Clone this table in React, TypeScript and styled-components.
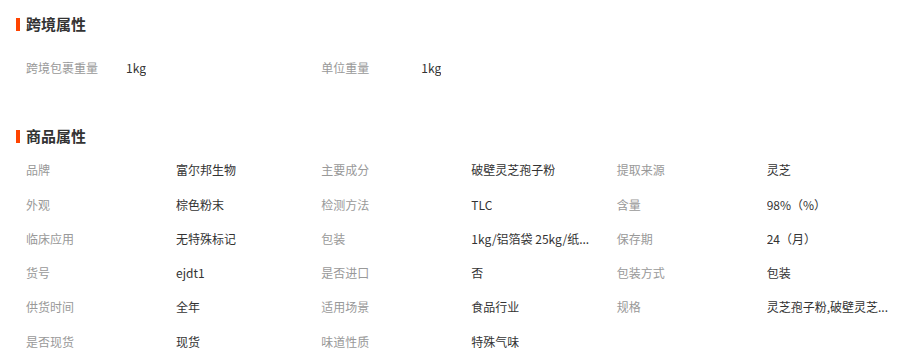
import React from "react";
import styled, { createGlobalStyle } from "styled-components";

const GlobalStyle = createGlobalStyle`
  html, body { margin: 0; padding: 0; background: #fff; }
  body { font-family: "Noto Sans CJK SC", "Microsoft YaHei", sans-serif; }
`;

const Page = styled.div`
  width: 915px;
  padding-left: 16px;
  box-sizing: border-box;
`;

const Section = styled.section<{ $top: number }>`
  padding-top: ${(p) => p.$top}px;
`;

const Title = styled.h3`
  margin: 0;
  height: 20px;
  display: flex;
  align-items: center;
  gap: 6px;
  font-size: 15px;
  font-weight: 700;
  color: #333;
  line-height: 20px;
  &::before {
    content: "";
    width: 4px;
    height: 13px;
    background: #ff4400;
  }
`;

const List = styled.ul<{ $gap: number }>`
  list-style: none;
  margin: ${(p) => p.$gap}px 0 0;
  padding: 0 0 0 10px;
  width: 886px;
  display: grid;
  grid-template-columns: repeat(3, 1fr);
  grid-auto-rows: 34.3px;
`;

const Item = styled.li`
  display: flex;
  align-items: center;
  font-size: 12px;
  min-width: 0;
`;

const Label = styled.span<{ $w: number }>`
  flex: none;
  width: ${(p) => p.$w}px;
  color: #999;
  white-space: nowrap;
`;

const Value = styled.span`
  color: #333;
  max-width: 130px;
  white-space: nowrap;
  overflow: hidden;
  text-overflow: ellipsis;
`;

const crossBorder: [string, string][] = [
  ["跨境包裹重量", "1kg"],
  ["单位重量", "1kg"],
];

const goods: [string, string][] = [
  ["品牌", "富尔邦生物"],
  ["主要成分", "破壁灵芝孢子粉"],
  ["提取来源", "灵芝"],
  ["外观", "棕色粉末"],
  ["检测方法", "TLC"],
  ["含量", "98%（%）"],
  ["临床应用", "无特殊标记"],
  ["包装", "1kg/铝箔袋 25kg/纸..."],
  ["保存期", "24（月）"],
  ["货号", "ejdt1"],
  ["是否进口", "否"],
  ["包装方式", "包装"],
  ["供货时间", "全年"],
  ["适用场景", "食品行业"],
  ["规格", "灵芝孢子粉,破壁灵芝..."],
  ["是否现货", "现货"],
  ["味道性质", "特殊气味"],
];

export default function App() {
  return (
    <>
      <GlobalStyle />
      <Page>
        <Section $top={14}>
          <Title>跨境属性</Title>
          <List $gap={16.5}>
            {crossBorder.map(([k, v]) => (
              <Item key={k}>
                <Label $w={100}>{k}</Label>
                <Value>{v}</Value>
              </Item>
            ))}
          </List>
        </Section>
        <Section $top={41.5}>
          <Title>商品属性</Title>
          <List $gap={6.3}>
            {goods.map(([k, v]) => (
              <Item key={k}>
                <Label $w={150}>{k}</Label>
                <Value>{v}</Value>
              </Item>
            ))}
          </List>
        </Section>
      </Page>
    </>
  );
}
